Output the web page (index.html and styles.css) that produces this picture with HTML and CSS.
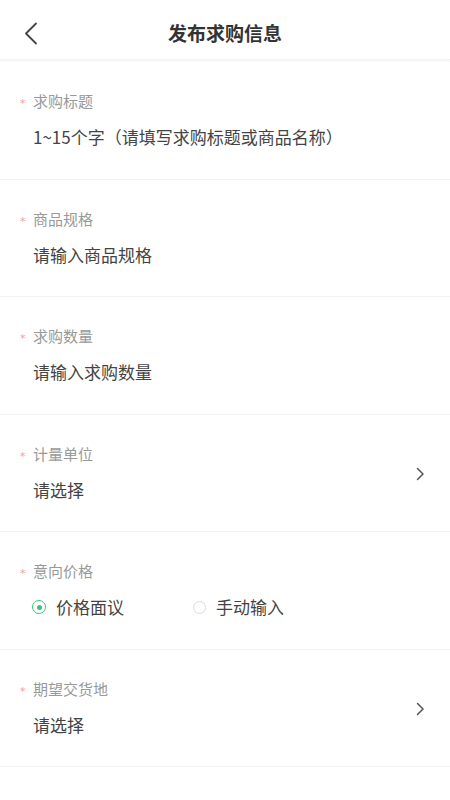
FILE: index.html
```html
<!DOCTYPE html>
<html lang="zh-CN">
<head>
    <meta charset="UTF-8">
    <meta name="viewport" content="width=device-width, initial-scale=1.0">
    <title>发布求购信息</title>
    <link rel="stylesheet" href="styles.css">
</head>
<body>

<div class="header">
    <span class="back">
        <svg width="14" height="23" viewBox="0 0 14 23"><path d="M12 1.5 L2 11.5 L12 21.5" fill="none" stroke="#444" stroke-width="1.8" stroke-linecap="round" stroke-linejoin="round"/></svg>
    </span>
    <h1>发布求购信息</h1>
</div>
<div class="header-shadow"></div>

<div class="form">
    <div class="field">
        <div class="field-main">
            <div class="label"><span class="star">*</span>求购标题</div>
            <div class="value">1~15个字（请填写求购标题或商品名称）</div>
        </div>
    </div>
    <div class="field">
        <div class="field-main">
            <div class="label"><span class="star">*</span>商品规格</div>
            <div class="value">请输入商品规格</div>
        </div>
    </div>
    <div class="field">
        <div class="field-main">
            <div class="label"><span class="star">*</span>求购数量</div>
            <div class="value">请输入求购数量</div>
        </div>
    </div>
    <div class="field">
        <div class="field-main">
            <div class="label"><span class="star">*</span>计量单位</div>
            <div class="value">请选择</div>
        </div>
        <span class="arrow">
            <svg width="9" height="14" viewBox="0 0 9 14"><path d="M1.5 1.5 L7 7 L1.5 12.5" fill="none" stroke="#555" stroke-width="1.5" stroke-linecap="round" stroke-linejoin="round"/></svg>
        </span>
    </div>
    <div class="field">
        <div class="field-main">
            <div class="label"><span class="star">*</span>意向价格</div>
            <div class="value radios">
                <div class="radio checked"><span class="dot"></span>价格面议</div>
                <div class="radio"><span class="dot"></span>手动输入</div>
            </div>
        </div>
    </div>
    <div class="field">
        <div class="field-main">
            <div class="label"><span class="star">*</span>期望交货地</div>
            <div class="value">请选择</div>
        </div>
        <span class="arrow">
            <svg width="9" height="14" viewBox="0 0 9 14"><path d="M1.5 1.5 L7 7 L1.5 12.5" fill="none" stroke="#555" stroke-width="1.5" stroke-linecap="round" stroke-linejoin="round"/></svg>
        </span>
    </div>
</div>

</body>
</html>
```

FILE: styles.css
```css
body {
    font-family: "Noto Sans CJK SC", "Noto Sans", sans-serif;
    background: #fff;
    color: #333;
    margin: 0;
    padding: 0;
}
.header {
    height: 59px;
    display: flex;
    align-items: center;
    justify-content: center;
    position: relative;
    background: #fff;
}
.header h1 {
    margin: 0;
    font-size: 19px;
    font-weight: 700;
    color: #333;
    line-height: 26px;
    padding-top: 6px;
}
.back {
    position: absolute;
    left: 24px;
    top: 22px;
    display: flex;
}
.header-shadow {
    height: 3px;
    background: linear-gradient(to bottom, #f1f1f1, #fafafa);
}
.field {
    height: 117.5px;
    box-sizing: border-box;
    border-bottom: 1px solid #f2f2f2;
    display: flex;
    align-items: center;
    padding: 0 25px 0 20px;
}
.field-main {
    flex: 1;
    align-self: flex-start;
    padding-top: 29px;
}
.label {
    font-size: 15px;
    line-height: 20px;
    color: #999;
    display: flex;
    align-items: center;
}
.star {
    width: 13px;
    color: #f79aa3;
    font-family: "DejaVu Sans", sans-serif;
    font-size: 11px;
    line-height: 12px;
    margin-top: 7px;
    align-self: flex-start;
}
.value {
    margin-top: 14px;
    padding-left: 13px;
    font-size: 17px;
    line-height: 24px;
    color: #444;
}
.arrow {
    display: flex;
    margin-top: 2px;
}
.radios {
    display: flex;
    padding-left: 12px;
}
.radio {
    width: 161px;
    display: flex;
    align-items: center;
}
.radio .dot {
    width: 13px;
    height: 13px;
    border: 1px solid #ddd;
    border-radius: 50%;
    box-sizing: border-box;
    margin-right: 10px;
    display: flex;
    align-items: center;
    justify-content: center;
}
.radio.checked .dot {
    width: 14px;
    height: 14px;
    border: 1.5px solid #3dc27b;
}
.radio.checked .dot::after {
    content: "";
    width: 5px;
    height: 5px;
    border-radius: 50%;
    background: #3dc27b;
}
```
